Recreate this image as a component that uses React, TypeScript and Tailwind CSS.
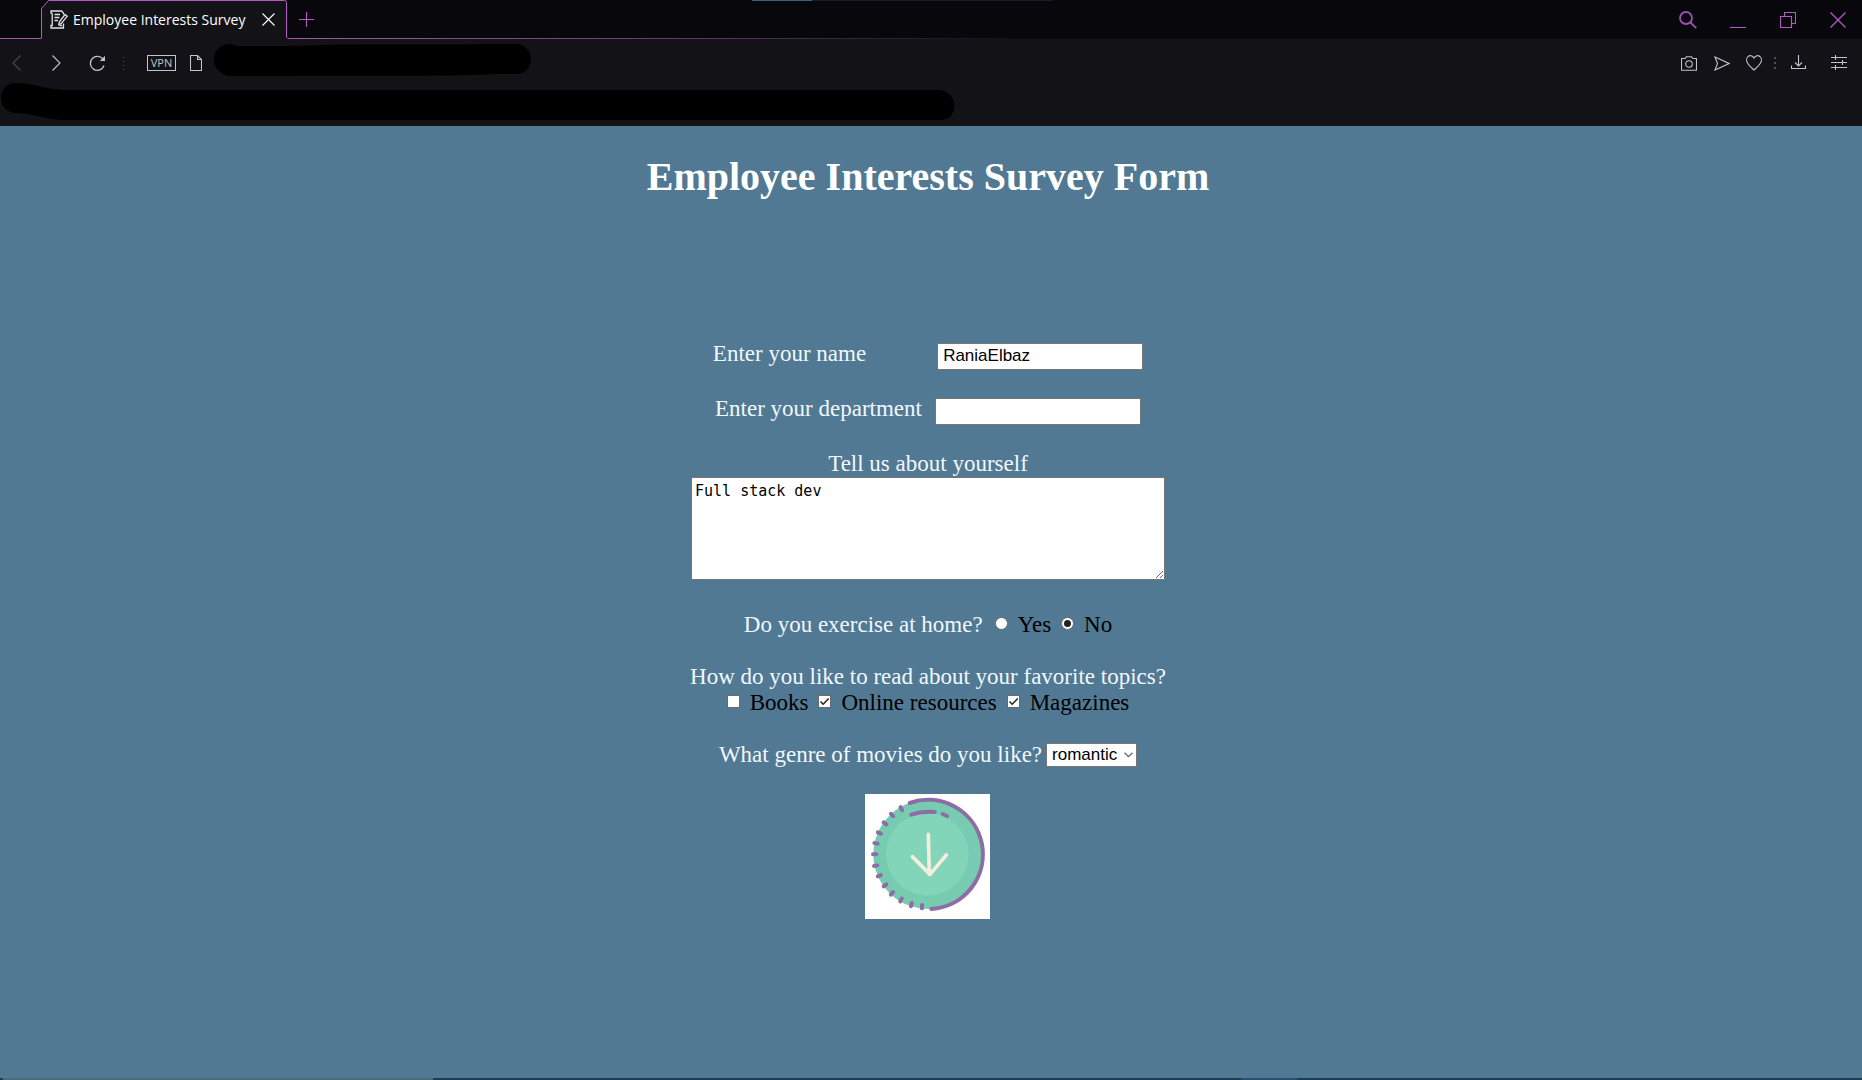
import React from "react";

const tickMarks = [
  [157, 86, -28],
  [129, 105, -42],
  [108, 130, -55],
  [91, 159, -68],
  [81, 190, -80],
  [77, 223, -90],
  [80, 257, -100],
  [91, 287, -112],
  [108, 316, -126],
  [129, 340, -140],
  [156, 360, -154],
  [187, 374, -166],
  [219, 380, -176],
];

function IconButton({ label, className, children }: { label: string; className?: string; children: React.ReactNode }) {
  return (
    <button type="button" aria-label={label} className={`flex h-6 shrink-0 items-center justify-center ${className ?? ""}`}>
      {children}
    </button>
  );
}

function Line({ w = 16, h = 16, children }: { w?: number; h?: number; children: React.ReactNode }) {
  return (
    <svg width={w} height={h} viewBox={`0 0 ${w} ${h}`} fill="none" stroke="currentColor" strokeWidth="1.1" aria-hidden="true">
      {children}
    </svg>
  );
}

function TabStrip() {
  return (
    <div className="relative flex h-[39px] items-start bg-[#08080c] text-[#b45ac3]">
      <div className="absolute top-0 left-[752px] flex h-px w-[301px] bg-[#1b1c24]">
        <div className="w-[60px] bg-[#3d6478]" />
      </div>
      <div className="h-[39px] w-[41px] border-b border-[#a855b5]" />
      <div className="relative flex h-[39px] w-[247px] shrink-0 items-center pr-3 pl-[9px] text-white">
        <svg className="absolute inset-0" width="247" height="39" viewBox="0 0 247 39" aria-hidden="true">
          <path d="M0 39V8.5L7 .5H243.5Q245.5 .5 245.5 2.5V37L247 39Z" fill="#121217" />
          <path d="M.5 38.5V8.5L7.5 .5H243.5Q245.5 .5 245.5 2.5V37L247 38.5" fill="none" stroke="#b45ac3" />
        </svg>
        <div className="relative flex w-full items-center">
          <svg className="shrink-0" width="18" height="19" viewBox="0 0 18 19" fill="none" stroke="#e4e4e8" strokeWidth="1.3" aria-hidden="true">
            <path d="M13.5 4.5V3L11.5 1H1V3.2H2.2M2.2 3.2V15.5H1V18H13.5V13.5" />
            <path d="M4.5 4.5H10M4.500 7.500H9.500M4.5 10.500H8M9.500 15.500H12" />
            <path d="M15 4.500L17.200 6.300L11.300 13.500L8.800 14.700L9.300 12Z" />
          </svg>
          <span className="ml-[5px] flex-1 font-['Open_Sans',sans-serif] text-sm leading-5 whitespace-nowrap">Employee Interests Survey</span>
          <button type="button" aria-label="Close tab" className="mr-px ml-3">
            <Line w={13} h={13}><path d="M.5 .5L12.5 12.5M12.5 .5L.5 12.5" /></Line>
          </button>
        </div>
      </div>
      <div className="relative flex h-[39px] flex-1 items-center">
        <div className="absolute bottom-0 left-0 h-px w-[720px] bg-linear-to-r from-[#a855b5] via-[#6c3a78] to-[#121217]" />
        <IconButton label="New tab" className="ml-[11px]">
          <Line w={15} h={15}><path d="M7.5 0V15M0 7.5H15" /></Line>
        </IconButton>
        <div className="ml-auto flex items-center pr-4">
          <IconButton label="Search tabs">
            <svg width="18" height="18" viewBox="0 0 18 18" fill="none" stroke="#a04fb0" strokeWidth="1.8" aria-hidden="true">
              <circle cx="7" cy="7" r="6" />
              <path d="M11.5 11.5L17.2 17.2" />
            </svg>
          </IconButton>
          <IconButton label="Minimize" className="ml-[33px]">
            <Line><path d="M0 15.5H16" /></Line>
          </IconButton>
          <IconButton label="Restore" className="ml-[34px]">
            <Line><path d="M.5 4.5H11.5V15.5H.5ZM4.5 4.5V.5H15.5V11.5H11.5" /></Line>
          </IconButton>
          <IconButton label="Close" className="ml-[34px]">
            <Line><path d="M.5 .5L15.5 15.5M15.5 .5L.5 15.5" strokeWidth="1.3" /></Line>
          </IconButton>
        </div>
      </div>
    </div>
  );
}

function Toolbar() {
  return (
    <div className="flex h-12 items-center text-[#c3c3cc]">
      <IconButton label="Back" className="ml-3 text-[#484850]">
        <Line w={9}><path d="M8.5 .5L1 8L8.5 15.5" /></Line>
      </IconButton>
      <IconButton label="Forward" className="ml-[31px]">
        <Line w={9}><path d="M.5 .5L8 8L.5 15.5" /></Line>
      </IconButton>
      <IconButton label="Reload" className="ml-7">
        <svg width="17" height="17" viewBox="0 0 17 17" fill="none" stroke="currentColor" strokeWidth="1.3" aria-hidden="true">
          <path d="M14.2 4.5A7 7 0 1 0 15 10.500" />
          <path d="M16 .8V6H10.800Z" fill="currentColor" stroke="none" />
        </svg>
      </IconButton>
      <svg className="ml-[17px] shrink-0 text-[#50505a]" width="1" height="13" viewBox="0 0 1 13" stroke="currentColor" strokeDasharray="1 3" aria-hidden="true">
        <path d="M.5 0V13" />
      </svg>
      <button type="button" className="ml-[23px] h-4 w-[29px] border border-[#c3c3cc] text-center font-['Open_Sans',sans-serif] text-[11px] leading-[14px]">
        VPN
      </button>
      <IconButton label="Page information" className="ml-[14px]">
        <Line w={12}><path d="M.5 .5H7.5L11.5 4.5V15.5H.5ZM7.5 .5V4.5H11.5" /></Line>
      </IconButton>
      <svg className="-mt-1.5 ml-3 shrink-0" width="317" height="32" viewBox="0 0 317 32" aria-hidden="true">
        <path d="M15 0C19 0 20 2 25 2C60 2 90 2 110 1C180 0 240 1 270 0H301C322 0 322 30 302 30H280C230 33 120 31 70 32H17C-6 30 -5 1 15 0Z" fill="#000" />
      </svg>
      <div className="ml-auto flex items-center pr-[15px]">
        <IconButton label="Snapshot">
          <Line h={15}><path d="M.5 2.5H4L5.5 .8H10.5L12 2.5H15.5V14.2H.5Z" /><circle cx="8" cy="8" r="3.3" /></Line>
        </IconButton>
        <IconButton label="Send" className="ml-[17px]">
          <Line h={15}><path d="M1 1L15 7.5L1 14L3.5 7.5Z" /></Line>
        </IconButton>
        <IconButton label="Add to favourites" className="ml-4">
          <Line><path d="M8 3C6.5 .2 3.5 .2 2 1.6C.2 3.2 .2 6.2 1.8 8.5C3.2 10.8 5.5 12.7 8 15C10.5 12.7 12.8 10.8 14.2 8.5C15.8 6.2 15.8 3.2 14 1.6C12.5 .2 9.5 .2 8 3Z" /></Line>
        </IconButton>
        <svg className="ml-3 text-[#50505a]" width="2" height="12" viewBox="0 0 2 12" stroke="currentColor" strokeWidth="2" strokeDasharray="2 3" aria-hidden="true">
          <path d="M1 0V12" />
        </svg>
        <IconButton label="Downloads" className="ml-[15px]">
          <Line><path d="M7.5 0V11M4 7.5L7.5 11L11 7.5M.5 10.5V13.500H14.5V10.5" /></Line>
        </IconButton>
        <IconButton label="Easy setup" className="ml-6">
          <Line><path d="M0 2.5H16M0 7.5H16M0 12.5H16M4.5 0V5M11.5 5V10M4.5 10V15" /></Line>
        </IconButton>
      </div>
    </div>
  );
}

function BookmarkBar() {
  return (
    <div className="flex h-[39px] items-start pl-px">
      <svg className="-mt-1 shrink-0" width="954" height="37" viewBox="0 0 954 37" aria-hidden="true">
        <path d="M15 0C35 0 44 7 66 7H938C958 8 958 37 940 37H62C42 36 36 31 15 30C-5 29 -5 0 15 0Z" fill="#000" />
      </svg>
    </div>
  );
}

function Check({ label, checked }: { label: string; checked?: boolean }) {
  return (
    <label className="flex items-center text-black">
      <span className="relative mr-2.5 mb-1 flex size-[13px]">
        <input type="checkbox" defaultChecked={checked} className="peer size-[13px] appearance-none border border-[#6b6b6b] bg-white" />
        <svg className="pointer-events-none absolute inset-0 hidden peer-checked:block" width="13" height="13" viewBox="0 0 13 13" fill="none" stroke="#222" strokeWidth="1.5" aria-hidden="true">
          <path d="M2.5 6.5L5.2 9.2L10.7 3.5" />
        </svg>
      </span>
      {label}
    </label>
  );
}

function Radio({ label, checked }: { label: string; checked?: boolean }) {
  return (
    <label className="flex items-center text-black">
      <span className="relative mr-2.5 mb-1 flex size-[13px] items-center justify-center">
        <input type="radio" name="exercise" defaultChecked={checked} className="peer size-[13px] appearance-none rounded-full border border-[#6b6b6b] bg-white" />
        <span className="pointer-events-none absolute hidden size-[7px] rounded-full bg-[#222] peer-checked:block" />
      </span>
      {label}
    </label>
  );
}

function SubmitArt() {
  return (
    <svg className="block size-full" viewBox="48 42 375 375" fill="none" strokeLinecap="round" strokeLinejoin="round" aria-hidden="true">
      <rect x="48" y="42" width="375" height="375" fill="#fff" />
      <circle cx="237" cy="223" r="164" fill="#76cbb0" />
      <circle cx="235" cy="223" r="124" fill="#82d5b9" />
      <g stroke="#8d6da3" strokeWidth="12">
        <path d="M182 69A164 164 0 1 1 247 387" />
        <path d="M187 104Q220 92 257 96M281 102L294 108" />
        {tickMarks.map(([x, y, angle]) => (
          <path key={`${x}-${y}`} d="M0 -5V5" transform={`translate(${x} ${y}) rotate(${angle})`} />
        ))}
      </g>
      <path d="M238 163L241 283M190 230L243 283L292 225" stroke="#f4eee0" strokeWidth="11" />
    </svg>
  );
}

const field = "h-[27px] w-[206px] border border-[#767676] bg-white px-[5px] font-['Liberation_Sans',sans-serif] text-[17px] leading-5 text-black";

export default function App() {
  return (
    <div className="flex min-h-screen flex-col bg-[#517993]">
      <header className="bg-[#121217]">
        <TabStrip />
        <Toolbar />
        <BookmarkBar />
      </header>
      <main className="flex flex-1 flex-col items-center pt-7 pr-1.5 font-['Liberation_Serif',serif]">
        <h1 className="text-[40px] leading-[46px] font-bold text-white">Employee Interests Survey Form</h1>
        <form className="mt-[141px] flex flex-col items-center text-[23px] leading-[26px] text-[#f0f8ff]" onSubmit={(e) => e.preventDefault()}>
          <div className="flex h-[27px] items-baseline">
            <label htmlFor="name" className="mr-[71px]">Enter your name</label>
            <input id="name" type="text" defaultValue="RaniaElbaz" className={field} />
          </div>
          <div className="mt-7 flex h-[27px] items-baseline">
            <label htmlFor="department" className="mr-[13px]">Enter your department</label>
            <input id="department" type="text" className={field} />
          </div>
          <label htmlFor="about" className="mt-7">Tell us about yourself</label>
          <textarea id="about" defaultValue="Full stack dev" className="h-[103px] w-[474px] border border-[#767676] bg-white p-[3px] font-['DejaVu_Sans_Mono',monospace] text-[15px] leading-5 text-black" />
          <fieldset className="mt-8 flex items-center">
            <legend className="float-left mr-3">Do you exercise at home?</legend>
            <div className="flex gap-2.5">
              <Radio label="Yes" />
              <Radio label="No" checked />
            </div>
          </fieldset>
          <fieldset className="mt-[26px] flex flex-col items-center">
            <legend className="text-center">How do you like to read about your favorite topics?</legend>
            <div className="flex justify-center gap-2.5">
              <Check label="Books" />
              <Check label="Online resources" checked />
              <Check label="Magazines" checked />
            </div>
          </fieldset>
          <div className="mt-[26px] flex items-center">
            <label htmlFor="genre" className="mr-1">What genre of movies do you like?</label>
            <span className="relative flex items-center">
              <select id="genre" defaultValue="romantic" className="h-6 w-[91px] appearance-none border border-[#767676] bg-white pl-[5px] font-['Liberation_Sans',sans-serif] text-[17px] leading-5 text-black">
                <option>romantic</option>
                <option>comedy</option>
                <option>action</option>
              </select>
              <svg className="pointer-events-none absolute right-1" width="9" height="6" viewBox="0 0 9 6" fill="none" stroke="#666" strokeWidth="1.3" aria-hidden="true">
                <path d="M.5 .7L4.5 4.7L8.5 .7" />
              </svg>
            </span>
          </div>
          <button type="submit" aria-label="Submit" className="mt-[26px] size-[125px]">
            <SubmitArt />
          </button>
        </form>
      </main>
      <footer className="flex h-0.5 bg-[#1d3c55]">
        <div className="ml-[3px] w-[430px] bg-[#4b6b7c]" />
        <div className="ml-[808px] w-[56px] bg-[#285370]" />
      </footer>
    </div>
  );
}
